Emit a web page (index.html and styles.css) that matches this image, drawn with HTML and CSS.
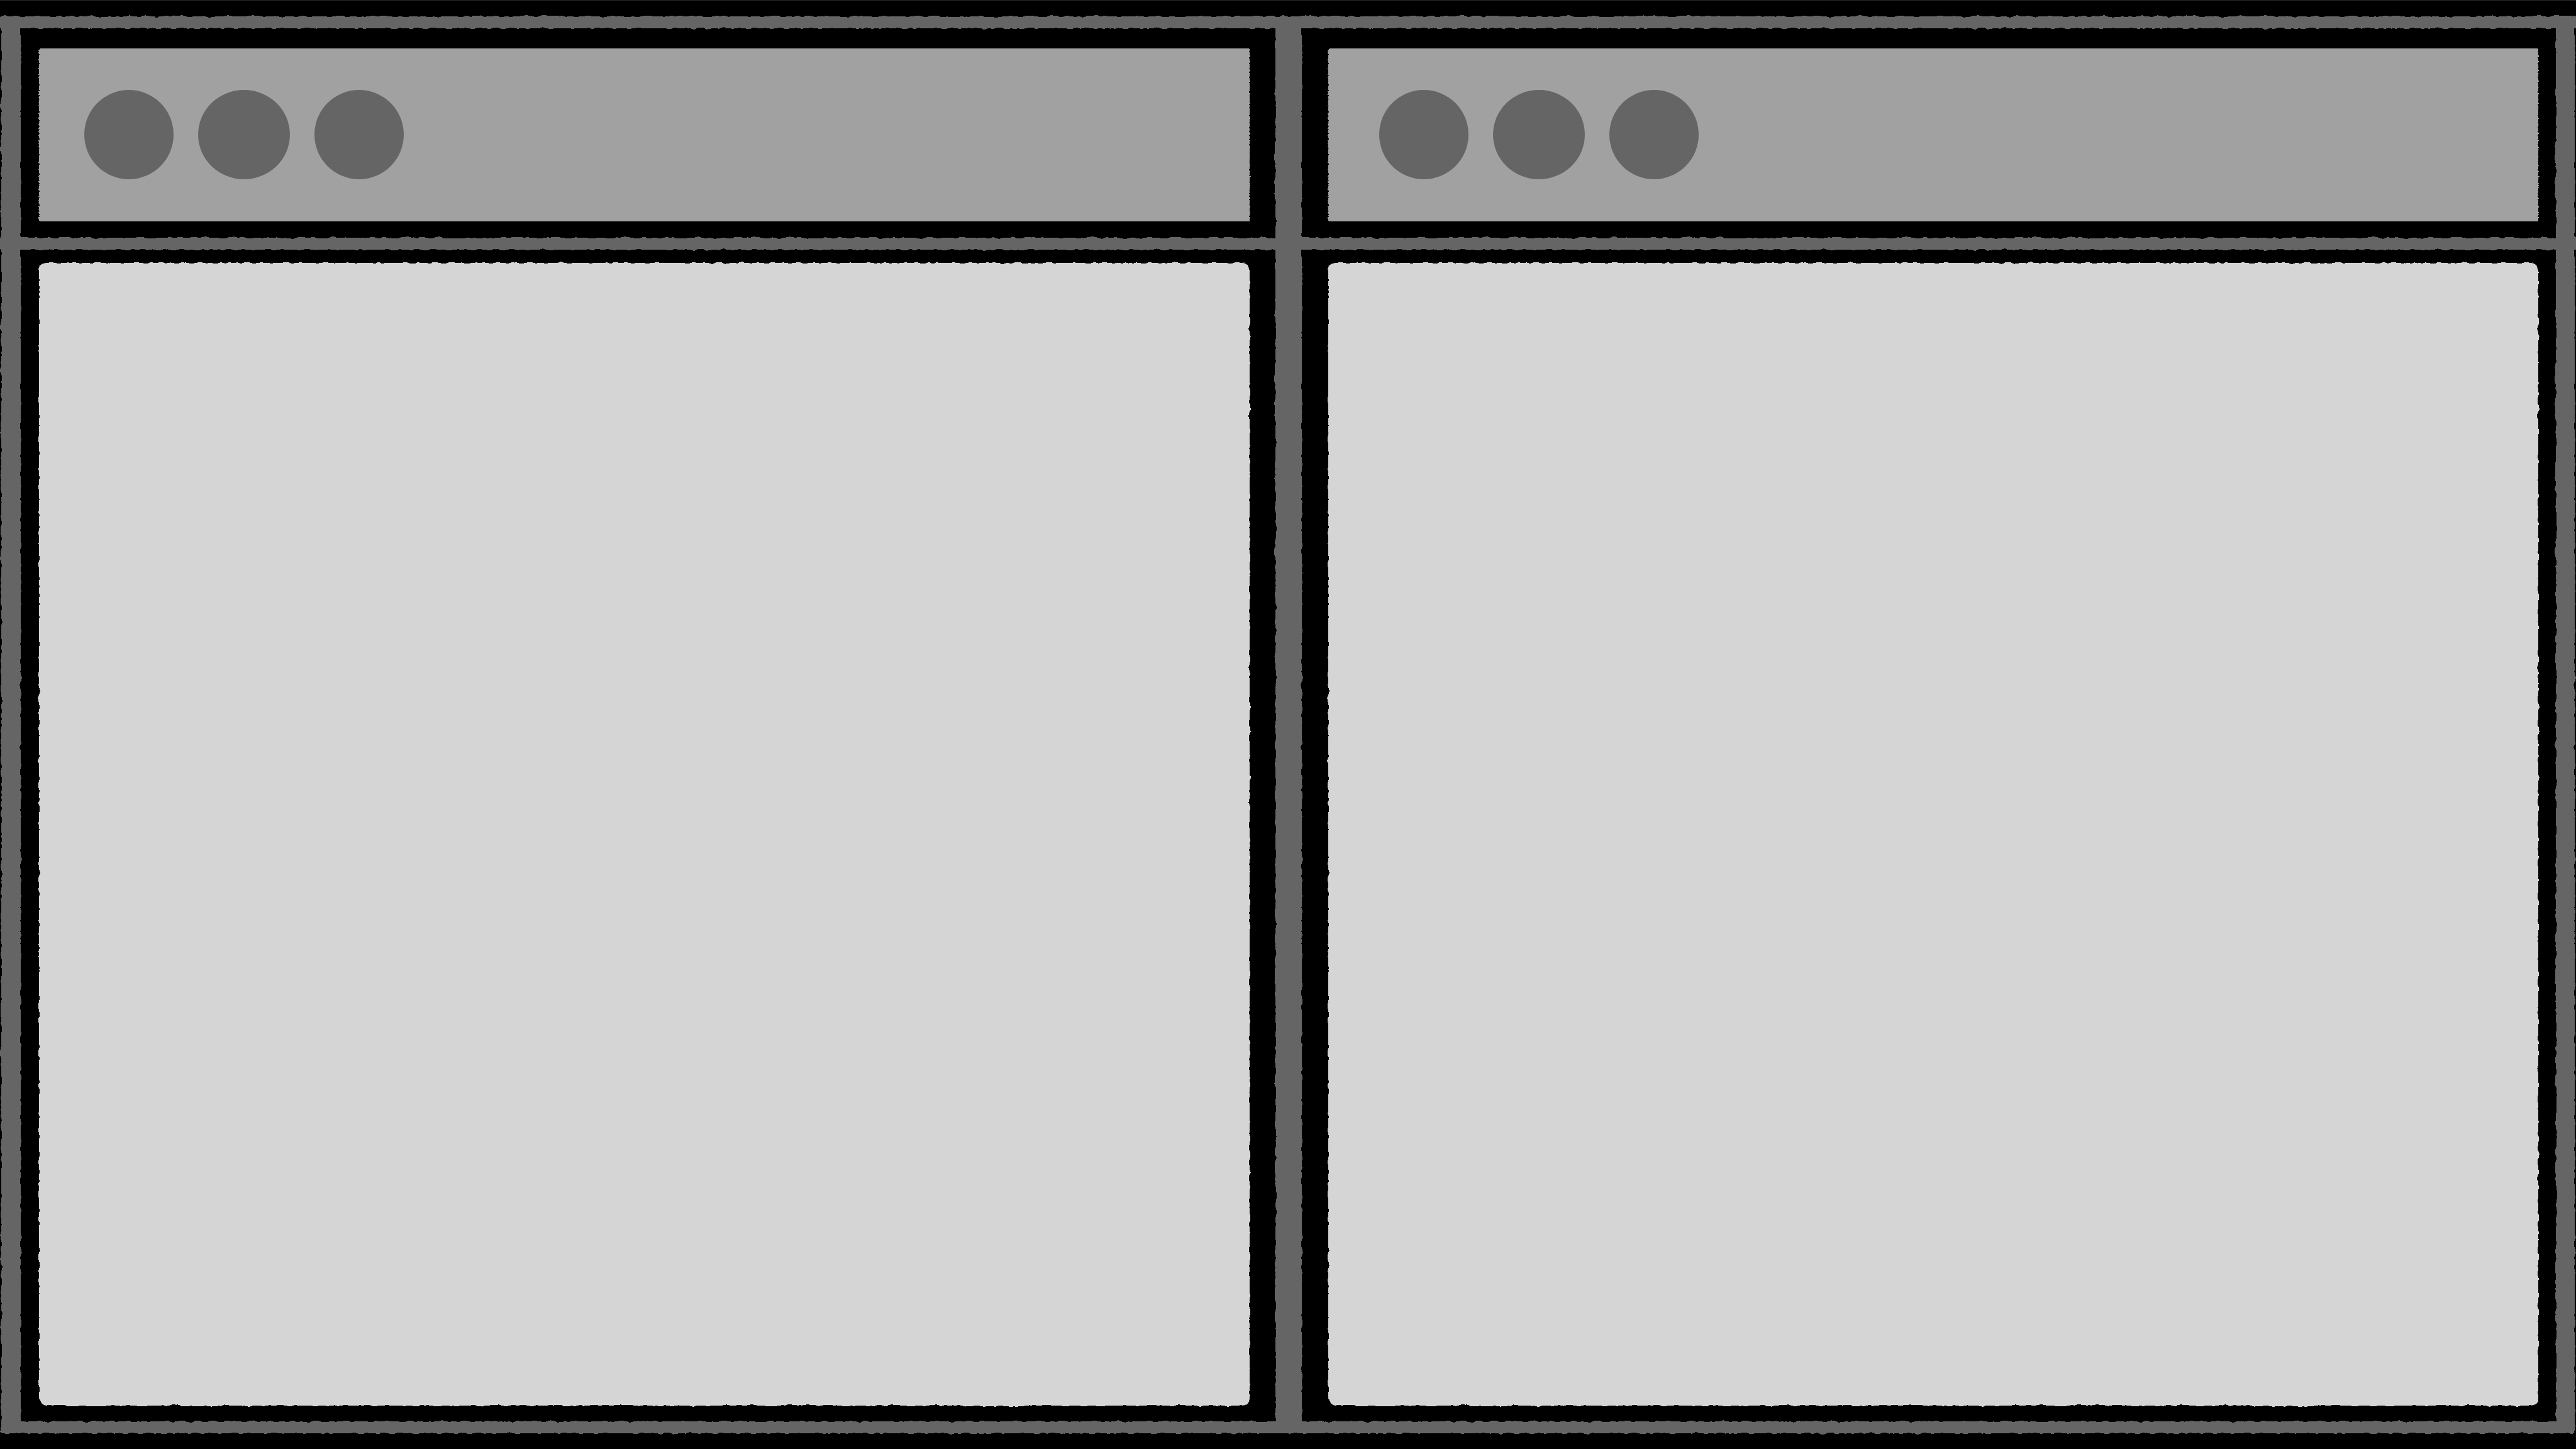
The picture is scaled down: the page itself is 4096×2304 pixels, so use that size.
FILE: index.html
```html
<!DOCTYPE html>
<html lang="en">
<head>
<meta charset="utf-8">
<meta name="viewport" content="width=device-width, initial-scale=1">
<title>Split windows</title>
<link rel="stylesheet" href="styles.css">
</head>
<body>
<svg class="filters" width="0" height="0" aria-hidden="true">
  <!-- small hand-inked wobble for the thin side strips -->
  <filter id="rough" x="-1" y="-0.02" width="3" height="1.04" color-interpolation-filters="sRGB">
    <feTurbulence type="fractalNoise" baseFrequency="0.08" numOctaves="2" seed="4"/>
    <feColorMatrix values="1 0 0 0 0  0 1 0 0 0  0 0 1 0 0  0 0 0 0 1"/>
    <feDisplacementMap in="SourceGraphic" scale="6" xChannelSelector="R" yChannelSelector="G"/>
  </filter>
  <!-- the same wobble for wide areas -->
  <filter id="rough-pane" x="-0.02" y="-0.05" width="1.04" height="1.1" color-interpolation-filters="sRGB">
    <feTurbulence type="fractalNoise" baseFrequency="0.08" numOctaves="2" seed="4"/>
    <feColorMatrix values="1 0 0 0 0  0 1 0 0 0  0 0 1 0 0  0 0 0 0 1"/>
    <feDisplacementMap in="SourceGraphic" scale="6" xChannelSelector="R" yChannelSelector="G"/>
  </filter>
  <!-- fine bristles on the left and right ends only -->
  <filter id="bristle" x="-0.02" y="0" width="1.04" height="1" color-interpolation-filters="sRGB">
    <feTurbulence type="fractalNoise" baseFrequency="0.001 0.35" numOctaves="2" seed="9"/>
    <feColorMatrix values="1 0 0 0 0  0 0 0 0 0.5  0 0 0 0 0.5  0 0 0 0 1"/>
    <feDisplacementMap in="SourceGraphic" scale="6" xChannelSelector="R" yChannelSelector="G"/>
  </filter>
</svg>
<div class="desk">
  <div class="strip strip-top"></div>
  <div class="row row-bars">
    <div class="side side-left"></div>
    <header class="pane pane-bar pane-left">
      <div class="bar"><span class="dot"></span><span class="dot dot-wide"></span><span class="dot"></span></div>
    </header>
    <header class="pane pane-bar pane-right">
      <div class="bar"><span class="dot"></span><span class="dot dot-wide"></span><span class="dot"></span></div>
    </header>
    <div class="side side-right"></div>
  </div>
  <div class="row row-views">
    <div class="side side-left side-long"></div>
    <section class="pane pane-view pane-left"><div class="view"></div></section>
    <section class="pane pane-view pane-right"><div class="view"></div></section>
    <div class="side side-right side-long"></div>
  </div>
  <div class="strip strip-bottom"></div>
</div>
</body>
</html>
```

FILE: styles.css
```css
:root {
  --line: #656565;
  --bar: #a1a1a1;
  --view: #d5d5d5;
  --edge: #2a2524;
}

* {
  box-sizing: border-box;
}

body {
  margin: 0;
  background: #000;
}

.filters {
  position: absolute;
}

.desk {
  display: flex;
  flex-direction: column;
  gap: 19px;
  min-height: 100vh;
  overflow: hidden;
  background: var(--line);
}

.strip {
  position: relative;
}

/* the ink runs past the window so that only its inner edge wobbles */
.strip::before {
  content: "";
  position: absolute;
  inset: 0 -20px;
  background: #000;
  filter: url(#rough-pane);
}

.strip-top {
  height: 26px;
}

.strip-top::before {
  top: -20px;
}

.strip-top::after {
  content: "";
  position: absolute;
  inset: 0 0 auto;
  height: 1px;
  background: var(--edge);
}

.strip-bottom {
  height: 25px;
}

.strip-bottom::before {
  bottom: -20px;
}

.row {
  display: flex;
}

.row-views {
  flex: 1;
}

.side {
  position: relative;
  width: 2px;
}

.side::before {
  content: "";
  position: absolute;
  inset: 0;
  background: #000;
  filter: url(#rough);
}

.side-left::before {
  left: -20px;
}

.side-right::before {
  right: -20px;
}

.side-long {
  margin-bottom: -19px;
}

.pane {
  position: relative;
  display: flex;
  flex: 1;
}

/* the black ground of a pane */
.pane::before {
  content: "";
  position: absolute;
  inset: 0;
  background: #000;
  filter: url(#rough-pane);
}

.pane-left {
  margin-left: 31px;
  padding-left: 29px;
  padding-right: 41px;
}

.pane-right {
  margin-left: 42px;
  margin-right: 30px;
  padding-left: 42px;
  padding-right: 28px;
}

.pane-bar {
  padding-top: 32px;
  padding-bottom: 26px;
}

.pane-view {
  padding-top: 21px;
  padding-bottom: 25px;
}

.bar {
  position: relative;
  display: flex;
  flex: 1;
  align-items: center;
  gap: 39px;
  padding: 66px 72px 67px;
}

.pane-right .bar {
  padding-left: 81px;
}

.bar::before {
  content: "";
  position: absolute;
  inset: 0;
  background: var(--bar);
  filter: url(#bristle);
}

.dot {
  position: relative;
  width: 142px;
  height: 142px;
  border-radius: 50%;
  background: var(--line);
}

.dot-wide {
  width: 146px;
}

.view {
  position: relative;
  flex: 1;
  border-radius: 12px;
  background: var(--view);
  filter: url(#rough-pane);
}
```
